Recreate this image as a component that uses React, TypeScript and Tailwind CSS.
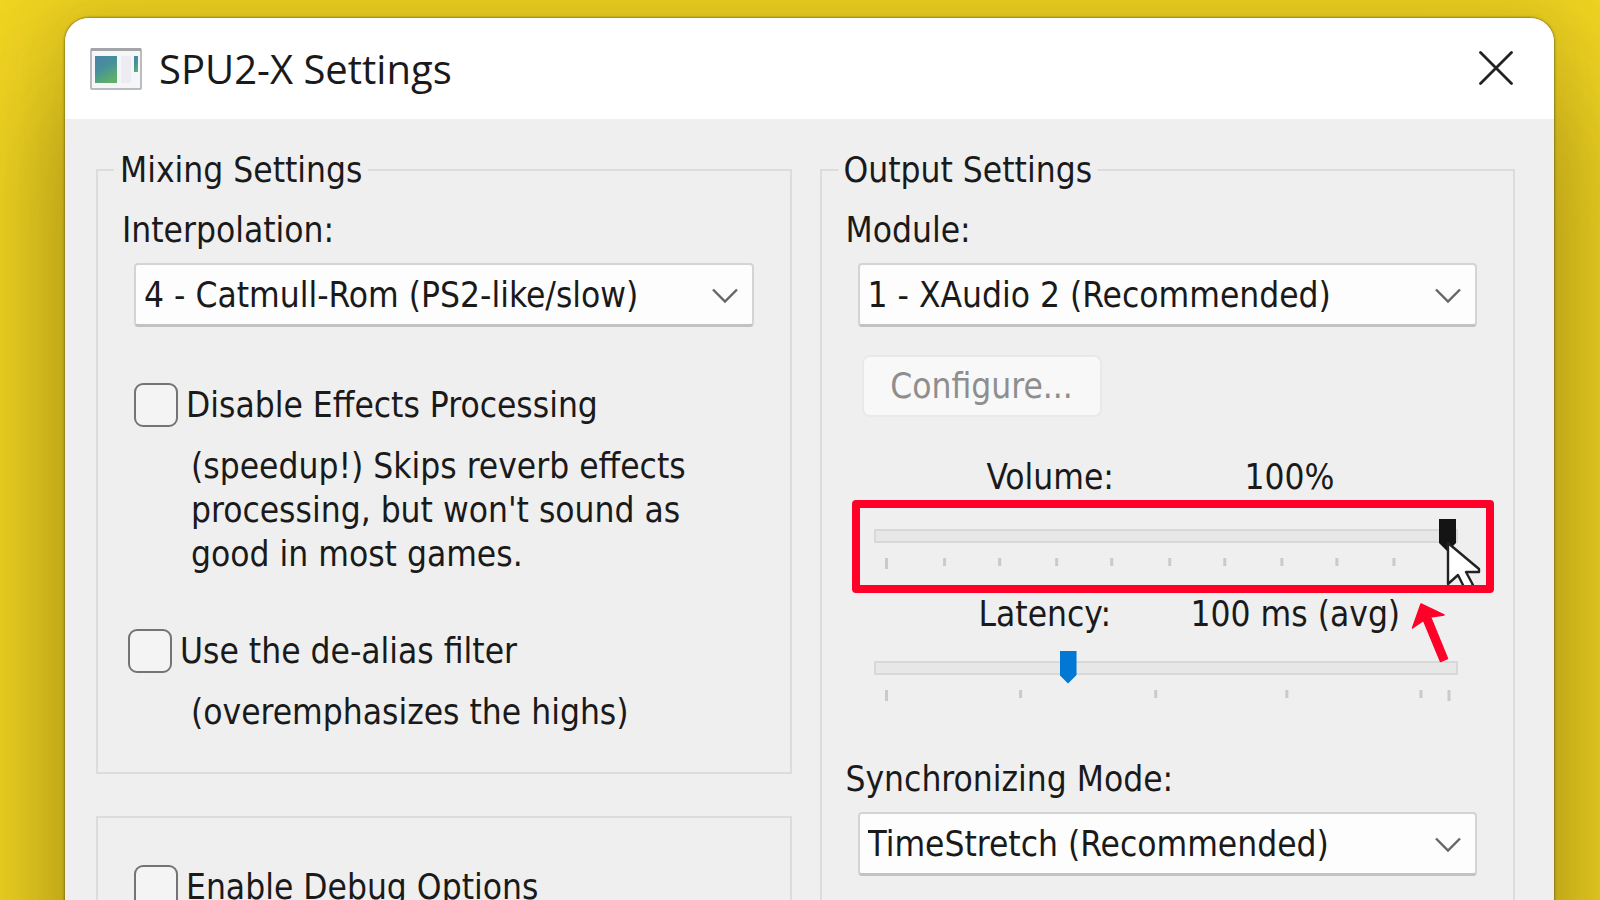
import type { ReactNode } from "react";

function AppIcon() {
  return (
    <svg className="h-[42px] w-[52px] shrink-0" viewBox="0 0 52 42" aria-hidden="true">
      <defs>
        <linearGradient id="pane" x1="0" y1="0" x2="0.5" y2="1">
          <stop offset="0" stopColor="#4c82a8" />
          <stop offset="0.5" stopColor="#46909a" />
          <stop offset="1" stopColor="#5fae6c" />
        </linearGradient>
      </defs>
      <rect x="1" y="1" width="50" height="40" rx="1" fill="#f5f6f8" stroke="#b9bbbf" strokeWidth="2" />
      <rect x="1" y="0" width="50" height="3" fill="#a3a5a9" />
      <rect x="5" y="8" width="22" height="27" fill="url(#pane)" />
      <rect x="31" y="8" width="10" height="27" fill="#ececf2" />
      <rect x="44" y="8" width="4" height="16" fill="url(#pane)" />
    </svg>
  );
}

function Group({ title, className, children }: { title?: string; className?: string; children: ReactNode }) {
  return (
    <fieldset className={`min-w-0 border-2 border-[#dcdcdc] ${className ?? ""}`}>
      {title && <legend className="ml-4 px-1.5 leading-[44px]">{title}</legend>}
      {children}
    </fieldset>
  );
}

function Dropdown({ id, label, value }: { id: string; label: string; value: string }) {
  return (
    <div>
      <label htmlFor={id} className="ml-6 block">
        {label}
      </label>
      <div className="relative mx-9 mt-[11px]">
        <select
          id={id}
          className="block h-16 w-full appearance-none rounded-[4px] border-2 border-b-[3px] border-[#d4d4d4] border-b-[#c2c2c2] bg-[#fdfdfd] pr-16 pl-2 text-[#1a1a1a]"
        >
          <option>{value}</option>
        </select>
        <svg
          className="pointer-events-none absolute top-[25px] right-4 h-[16px] w-[26px]"
          viewBox="0 0 26 16"
          fill="none"
          stroke="#666"
          strokeWidth="2.4"
          aria-hidden="true"
        >
          <path d="M1 1.500 13 13.500 25 1.500" />
        </svg>
      </div>
    </div>
  );
}

function Check({ label, className }: { label: string; className?: string }) {
  return (
    <label className={`flex h-11 items-center gap-2 ${className ?? ""}`}>
      <input
        type="checkbox"
        className="size-11 shrink-0 appearance-none rounded-[9px] border-2 border-[#747474] bg-[#f4f4f4] checked:bg-[#0078d4]"
      />
      <span>{label}</span>
    </label>
  );
}

const sliderBase =
  "block h-[33px] w-full appearance-none bg-transparent [&::-webkit-slider-runnable-track]:h-[14px] [&::-webkit-slider-runnable-track]:border-2 [&::-webkit-slider-runnable-track]:border-[#d8d8d8] [&::-webkit-slider-runnable-track]:bg-[#e7e7e7] [&::-webkit-slider-thumb]:mt-[-12px] [&::-webkit-slider-thumb]:h-[33px] [&::-webkit-slider-thumb]:w-[17px] [&::-webkit-slider-thumb]:appearance-none [&::-webkit-slider-thumb]:[clip-path:polygon(0_0,100%_0,100%_74%,50%_100%,0_74%)]";

function Ticks({ at }: { at: number[] }) {
  return (
    <svg
      className="mt-[6px] block h-[11px] w-full"
      viewBox="0 0 584 11"
      preserveAspectRatio="none"
      fill="#cacaca"
      aria-hidden="true"
    >
      {at.map((x) => (
        <rect key={x} x={x - 1} y="0" width="3" height={x === 12 || x === 574 ? 11 : 8} />
      ))}
    </svg>
  );
}

export default function App() {
  return (
    <main className="h-screen overflow-hidden bg-[#f0d422] pt-[18px] pr-[46px] pl-[65px] font-['DejaVu_Sans_Condensed','Noto_Sans',sans-serif] text-[35px] leading-[44px] text-[#1a1a1a]">
      <section
        aria-labelledby="window-title"
        className="min-h-screen overflow-hidden rounded-t-[24px] bg-[#efefef] shadow-[0_0_2px_1px_rgba(90,80,20,0.55),0_0_60px_20px_rgba(60,45,0,0.13),0_100px_110px_24px_rgba(60,45,0,0.25)]"
      >
        <header className="flex h-[101px] items-center bg-white pr-[40px] pl-[25px]">
          <AppIcon />
          <h1 id="window-title" className="ml-[17px] grow font-['Open_Sans','Noto_Sans',sans-serif] text-[40px] leading-[48px]">
            SPU2-X Settings
          </h1>
          <button type="button" aria-label="Close" className="size-9">
            <svg className="size-9" viewBox="0 0 36 36" fill="none" stroke="#222" strokeWidth="2.800" strokeLinecap="round">
              <path d="M2.500 1.500 33.500 32.500M33.500 1.500 2.500 32.500" />
            </svg>
          </button>
        </header>

        <div className="grid grid-cols-2 gap-x-7 pt-[29px] pr-[39px] pl-[31px]">
          <div className="flex flex-col gap-[42px]">
            <Group title="Mixing Settings" className="pb-[38px]">
              <div className="pt-4">
                <Dropdown id="interpolation" label="Interpolation:" value="4 - Catmull-Rom (PS2-like/slow)" />
              </div>
              <Check label="Disable Effects Processing" className="mt-14 ml-9" />
              <p className="mt-[17px] ml-[93px]">
                (speedup!) Skips reverb effects
                <br />
                processing, but won't sound as
                <br />
                good in most games.
              </p>
              <Check label="Use the de-alias filter" className="mt-[53px] ml-[30px]" />
              <p className="mt-[17px] ml-[93px]">(overemphasizes the highs)</p>
            </Group>
            <Group className="pt-[47px] pb-10">
              <Check label="Enable Debug Options" className="ml-9" />
            </Group>
          </div>

          <Group title="Output Settings">
            <div className="pt-4">
              <Dropdown id="module" label="Module:" value="1 - XAudio 2 (Recommended)" />
            </div>
            <button
              type="button"
              disabled
              className="mt-7 ml-10 h-[62px] w-60 rounded-[8px] border-2 border-[#e9e9e9] bg-[#f8f8f8] text-[#8e8e8e]"
            >
              Configure...
            </button>

            <div className="mt-[38px] mr-[55px] ml-[52px]">
              <div className="flex pl-[113px]">
                <label htmlFor="volume" className="w-[258px]">
                  Volume:
                </label>
                <output htmlFor="volume">100%</output>
              </div>
              <div className="relative mt-5">
                <input
                  id="volume"
                  type="range"
                  min={0}
                  max={100}
                  defaultValue={100}
                  className={`${sliderBase} [&::-webkit-slider-thumb]:bg-[#141414]`}
                />
                <Ticks at={[12, 70, 125, 182, 237, 295, 350, 407, 462, 519]} />
                <svg
                  className="pointer-events-none absolute top-[22px] right-[-24px] h-[46px] w-[36px]"
                  viewBox="0 0 36 46"
                  fill="#fff"
                  stroke="#222"
                  strokeWidth="2.400"
                  aria-hidden="true"
                >
                  <path d="M2 2V43L12 34 19 48 27 44 20 31H33V28Z" strokeLinejoin="round" />
                </svg>
                <div className="pointer-events-none absolute -top-[19px] -right-9 -left-[22px] h-[93px] rounded-[4px] border-8 border-[#ff0029]" />
              </div>

              <div className="relative mt-[23px] flex pl-[105px]">
                <label htmlFor="latency" className="w-[212px]">
                  Latency:
                </label>
                <output htmlFor="latency">100 ms (avg)</output>
                <svg
                  className="pointer-events-none absolute top-[10px] right-[9px] z-10 h-[62px] w-[38px]"
                  viewBox="0 0 38 62"
                  fill="#ff0029"
                  stroke="#ff0029"
                  strokeLinejoin="round"
                  aria-hidden="true"
                >
                  <path d="M10 2 33 13 19.500 15 36.500 56.500 29.500 59.500 12.500 18.500 1.500 26Z" strokeWidth="1.500" />
                </svg>
              </div>
              <div className="mt-[15px]">
                <input
                  id="latency"
                  type="range"
                  min={3}
                  max={300}
                  defaultValue={100}
                  className={`${sliderBase} [&::-webkit-slider-thumb]:bg-[#0078d4]`}
                />
                <Ticks at={[12, 146, 281, 412, 546, 574]} />
              </div>
            </div>

            <div className="mt-14">
              <Dropdown id="sync" label="Synchronizing Mode:" value="TimeStretch (Recommended)" />
            </div>
          </Group>
        </div>
      </section>
    </main>
  );
}
